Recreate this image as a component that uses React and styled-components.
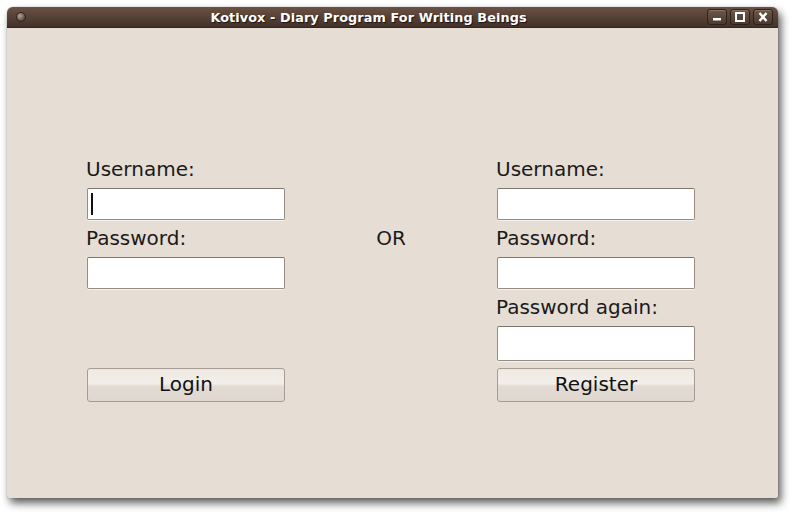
import React from 'react'
import styled, { createGlobalStyle } from 'styled-components'

const GlobalStyle = createGlobalStyle`
  html, body {
    margin: 0;
    padding: 0;
    background: #ffffff;
  }
  body {
    font-family: 'DejaVu Sans', 'Liberation Sans', sans-serif;
  }
`

const Page = styled.div`
  width: 800px;
  height: 521px;
  padding: 7px 0 0 7px;
  box-sizing: border-box;
`

const Window = styled.div`
  width: 771px;
  height: 491px;
  display: flex;
  flex-direction: column;
  border-radius: 6px 6px 2px 2px;
  background: #e6ddd4;
  box-shadow: 3px 5px 9px rgba(0, 0, 0, 0.65), 0 0 1px rgba(0, 0, 0, 0.5);
  overflow: hidden;
`

const TitleBar = styled.div`
  height: 21px;
  flex: none;
  display: flex;
  align-items: center;
  background: linear-gradient(#6a5144, #523e34 60%, #43322a);
  border-bottom: 1px solid #33261f;
  box-sizing: border-box;
`

const MenuKnob = styled.div`
  width: 23px;
  display: flex;
  justify-content: center;
  &::before {
    content: '';
    width: 8px;
    height: 8px;
    border-radius: 50%;
    margin-left: 4px;
    background: radial-gradient(circle at 35% 35%, #b5a79d, #5d4a3f 70%);
    border: 1px solid #2f231d;
  }
`

const Title = styled.div`
  flex: 1;
  text-align: center;
  color: #ffffff;
  font-weight: bold;
  font-size: 12.8px;
  letter-spacing: 0.1px;
  text-shadow: 1px 1px 1px #1c1410;
`

const Controls = styled.div`
  display: flex;
  gap: 3px;
  padding-right: 5px;
`

const ControlButton = styled.div`
  width: 20px;
  height: 16px;
  box-sizing: border-box;
  border: 1px solid #2d211b;
  border-radius: 3px;
  background: linear-gradient(#6e5749, #4b382f);
  box-shadow: inset 0 1px 0 rgba(255, 255, 255, 0.18);
  display: flex;
  align-items: center;
  justify-content: center;
`

const Content = styled.div`
  flex: 1;
  display: grid;
  grid-template-columns: 198px 212px 198px;
  align-items: stretch;
  align-content: start;
  padding: 129px 0 0 80px;
`

const Column = styled.div`
  display: flex;
  flex-direction: column;
`

const Middle = styled.div`
  display: flex;
  justify-content: center;
  padding-top: 69px;
  font-size: 20px;
  line-height: 24px;
  color: #1a1a1a;
`

const Label = styled.div`
  font-size: 20px;
  line-height: 24px;
  color: #1a1a1a;
  margin-left: -1px;
  margin-top: ${(p) => (p.first ? '0' : '6px')};
`

const TextBox = styled.div`
  position: relative;
  height: ${(p) => p.h || 32}px;
  margin-top: 7px;
  box-sizing: border-box;
  background: #ffffff;
  border: 1px solid #968c83;
  border-top-color: #7e746c;
  border-radius: 2px;
  box-shadow: 0 1px 0 rgba(255, 255, 255, 0.6);
  &::before {
    content: '';
    display: ${(p) => (p.focused ? 'block' : 'none')};
    position: absolute;
    left: 3px;
    top: 4px;
    width: 2px;
    height: 22px;
    background: #111;
  }
`

const Button = styled.div`
  height: 34px;
  margin-top: ${(p) => (p.pushDown ? 'auto' : '7px')};
  box-sizing: border-box;
  border: 1px solid #a69c93;
  border-radius: 3px;
  background: linear-gradient(#efe9e3, #f3eee9 45%, #e3dbd3 55%, #e0d8d0);
  display: flex;
  align-items: center;
  justify-content: center;
  padding-bottom: 2px;
  font-size: 20px;
  color: #111;
`

const Win = ({ kind }) => (
  <svg width="12" height="10" viewBox="0 0 12 10">
    {kind === 'min' && <rect x="2" y="6" width="8" height="2.5" fill="#fff" />}
    {kind === 'max' && (
      <rect x="2" y="1" width="8" height="8" fill="none" stroke="#fff" strokeWidth="2" />
    )}
    {kind === 'close' && (
      <path d="M2.5 1 L9.5 9 M9.5 1 L2.5 9" stroke="#fff" strokeWidth="2.4" />
    )}
  </svg>
)

const App = () => (
  <>
    <GlobalStyle />
    <Page>
      <Window>
        <TitleBar>
          <MenuKnob />
          <Title>Kotivox - Diary Program For Writing Beings</Title>
          <Controls>
            <ControlButton>
              <Win kind="min" />
            </ControlButton>
            <ControlButton>
              <Win kind="max" />
            </ControlButton>
            <ControlButton>
              <Win kind="close" />
            </ControlButton>
          </Controls>
        </TitleBar>
        <Content>
          <Column>
            <Label first>Username:</Label>
            <TextBox focused />
            <Label>Password:</Label>
            <TextBox />
            <Button pushDown>Login</Button>
          </Column>
          <Middle>OR</Middle>
          <Column>
            <Label first>Username:</Label>
            <TextBox />
            <Label>Password:</Label>
            <TextBox />
            <Label>Password again:</Label>
            <TextBox h={35} />
            <Button>Register</Button>
          </Column>
        </Content>
      </Window>
    </Page>
  </>
)

export default App
